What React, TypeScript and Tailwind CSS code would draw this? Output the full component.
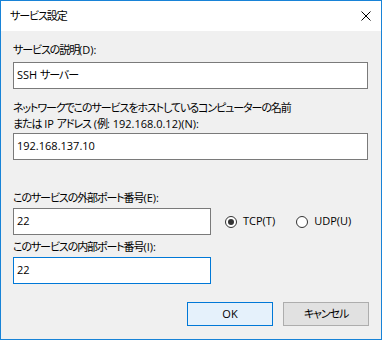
// Windows-style "サービス設定" dialog

const isCJK = (ch: string) => /[\u3000-\u9fff\uff00-\uffef]/.test(ch);

// split a string into CJK / latin runs so the kana can be tightened like Yu Gothic UI
const T = ({ text }: { text: string }) => {
  const runs: { cjk: boolean; s: string }[] = [];
  for (const ch of text) {
    const cjk = isCJK(ch);
    const last = runs[runs.length - 1];
    if (last && last.cjk === cjk) last.s += ch;
    else runs.push({ cjk, s: ch });
  }
  return (
    <span className="whitespace-pre">
      {runs.map((r, i) =>
        r.cjk ? (
          <span key={i} className="tracking-[-1.1px]">
            {r.s}
          </span>
        ) : (
          <span key={i}>{r.s}</span>
        )
      )}
    </span>
  );
};

const Field = ({ value, focused = false, wide = true }: { value: string; focused?: boolean; wide?: boolean }) => (
  <div
    className={`h-[27px] ${wide ? "w-[355px]" : "w-[198px]"} bg-white border ${
      focused ? "border-[#0078d7]" : "border-[#7a7a7a]"
    } flex items-center pl-[3px] pb-[1px] text-black`}
  >
    <T text={value} />
  </div>
);

const Radio = ({ label, checked = false }: { label: string; checked?: boolean }) => (
  <label className="flex items-center gap-[6px] text-black">
    <span className="w-[12px] h-[12px] rounded-full border border-[#333333] bg-white grid place-items-center">
      {checked && <span className="w-[6px] h-[6px] rounded-full bg-[#333333]" />}
    </span>
    <span className="pb-[1px]">{label}</span>
  </label>
);

export default function App() {
  return (
    <div className="w-[382px] h-[340px] border border-[#1883d7] bg-[#f0f0f0] flex flex-col font-['Open_Sans','Noto_Sans_CJK_JP',sans-serif] [font-feature-settings:'palt'] text-[11px] leading-[16px] text-black">
      <div className="h-[30px] bg-white flex items-center justify-between pl-[9px] pr-[10px]">
        <span className="pb-[1px]">
          <T text="サービス設定" />
        </span>
        <svg width="10" height="10" viewBox="0 0 10 10" className="mt-[-1px]">
          <path d="M0.5 0.5 L9.5 9.5 M9.5 0.5 L0.5 9.5" stroke="#000" strokeWidth="1" fill="none" />
        </svg>
      </div>

      <div className="flex flex-col px-[12px] pt-[11px]">
        <div>
          <T text="サービスの説明(D):" />
        </div>
        <div className="mt-[4px]">
          <Field value="SSH サーバー" />
        </div>

        <div className="mt-[11px]">
          <T text="ネットワークでこのサービスをホストしているコンピューターの名前" />
          <br />
          <T text="または IP アドレス (例: 192.168.0.12)(N):" />
        </div>
        <div className="mt-[1px]">
          <Field value="192.168.137.10" />
        </div>

        <div className="mt-[30px]">
          <T text="このサービスの外部ポート番号(E):" />
        </div>
        <div className="mt-[2px] flex items-center">
          <Field value="22" wide={false} />
          <div className="ml-[14px] flex items-center gap-[21px]">
            <Radio label="TCP(T)" checked />
            <Radio label="UDP(U)" />
          </div>
        </div>

        <div className="mt-[4px]">
          <T text="このサービスの内部ポート番号(I):" />
        </div>
        <div className="mt-[2px]">
          <Field value="22" wide={false} focused />
        </div>

        <div className="mt-[18px] flex justify-end gap-[10px]">
          <button className="w-[86px] h-[24px] bg-[#e5f1fb] border border-[#0078d7] text-black">OK</button>
          <button className="w-[86px] h-[24px] bg-[#e1e1e1] border border-[#adadad] text-black">
            <T text="キャンセル" />
          </button>
        </div>
      </div>
    </div>
  );
}
